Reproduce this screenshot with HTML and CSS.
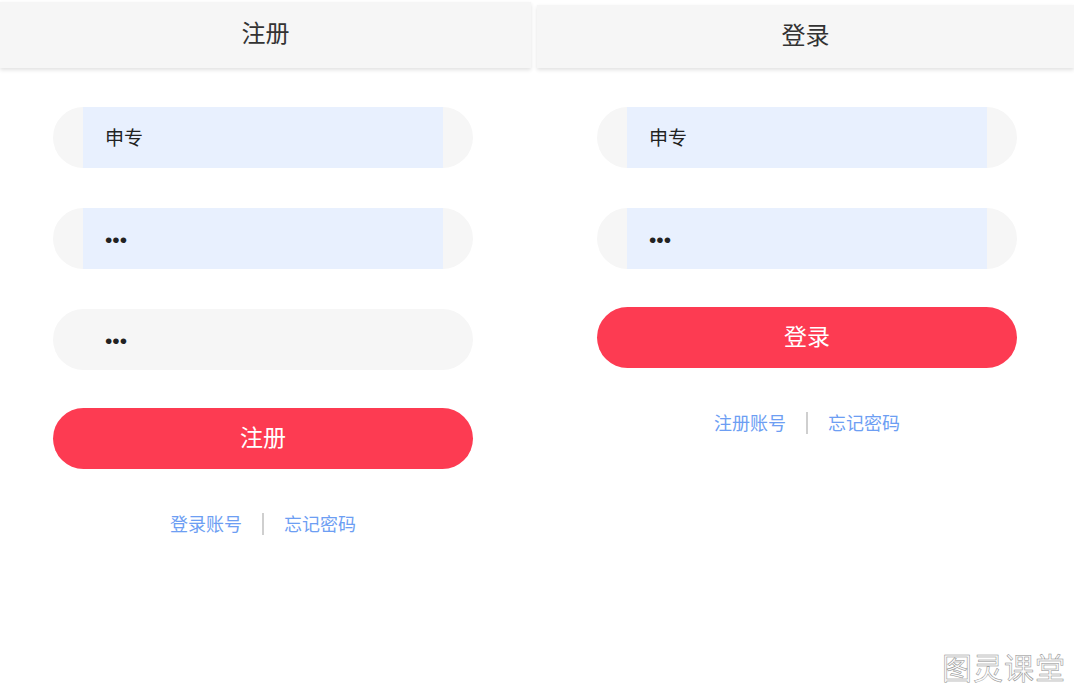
FILE: index.html
```html
<!DOCTYPE html>
<html lang="zh-CN">
<head>
    <meta charset="UTF-8">
    <meta name="viewport" content="width=device-width, initial-scale=1.0">
    <title>注册 / 登录</title>
    <link rel="stylesheet" href="styles.css">
</head>
<body>
    <div class="screens">
        <!-- register screen -->
        <section class="screen screen-register">
            <header class="bar">注册</header>
            <form class="form">
                <div class="field"><input class="filled" type="text" value="申专"></div>
                <div class="field"><input class="filled" type="password" value="123"></div>
                <div class="field"><input type="password" value="123"></div>
                <button class="submit" type="button">注册</button>
                <div class="links">
                    <a href="#">登录账号</a>
                    <span class="divider"></span>
                    <a href="#">忘记密码</a>
                </div>
            </form>
        </section>

        <!-- login screen -->
        <section class="screen screen-login">
            <header class="bar">登录</header>
            <form class="form">
                <div class="field"><input class="filled" type="text" value="申专"></div>
                <div class="field"><input class="filled" type="password" value="123"></div>
                <button class="submit" type="button">登录</button>
                <div class="links">
                    <a href="#">注册账号</a>
                    <span class="divider"></span>
                    <a href="#">忘记密码</a>
                </div>
            </form>
        </section>
    </div>

    <div class="watermark">图灵课堂</div>
</body>
</html>
```

FILE: styles.css
```css
* {
    margin: 0;
    padding: 0;
    box-sizing: border-box;
}

body {
    font-family: "Noto Sans CJK SC", "Noto Sans", sans-serif;
    background: #fff;
    color: #333;
    width: 1074px;
    height: 691px;
    overflow: hidden;
    position: relative;
}

.screens {
    display: flex;
    gap: 6px;
}

.screen-register {
    width: 531px;
}

.screen-login {
    flex: 1;
}

.bar {
    background: #f6f6f6;
    box-shadow: 0 2px 4px rgba(0, 0, 0, 0.12);
    text-align: center;
    font-size: 24px;
    color: #333;
}

.screen-register .bar {
    margin-top: 2px;
    height: 66px;
    line-height: 60px;
}

.screen-login .bar {
    margin-top: 5px;
    height: 63px;
    line-height: 57px;
}

.form {
    width: 420px;
    padding-top: 39px;
}

.screen-register .form {
    margin-left: 53px;
}

.screen-login .form {
    margin-left: 60px;
}

.field {
    height: 61px;
    border-radius: 31px;
    background: #f6f6f6;
    padding: 0 30px;
}

.field + .field {
    margin-top: 40px;
}

.field input {
    display: block;
    width: 100%;
    height: 100%;
    border: none;
    outline: none;
    background: transparent;
    padding: 0 0 3px 22px;
    font-family: inherit;
    font-size: 19px;
    color: #222;
}

.field input[type="password"] {
    font-family: "Liberation Sans", sans-serif;
    font-size: 21px;
    letter-spacing: 0;
    padding-top: 6px;
}

.field input.filled {
    background: #e8f0fe;
}

.submit {
    display: block;
    width: 100%;
    height: 61px;
    margin-top: 38px;
    padding-bottom: 5px;
    border: none;
    border-radius: 31px;
    background: #fd3b52;
    color: #fff;
    font-family: inherit;
    font-size: 23px;
    cursor: pointer;
}

.links {
    display: flex;
    justify-content: center;
    align-items: center;
    gap: 20px;
    margin-top: 41px;
    font-size: 18px;
    line-height: 24px;
}

.links a {
    color: #6d9ef3;
    text-decoration: none;
}

.divider {
    width: 2px;
    height: 22px;
    margin-top: 3px;
    background: #cfcfcf;
}

.watermark {
    position: absolute;
    right: 8px;
    bottom: 3px;
    font-size: 30px;
    letter-spacing: 1px;
    color: #fbfbfb;
    -webkit-text-stroke: 0.5px #8c8c8c;
}
```
